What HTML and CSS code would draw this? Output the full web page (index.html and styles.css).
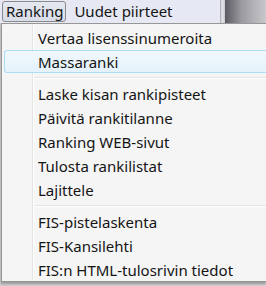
FILE: index.html
```html
<!DOCTYPE html>
<html>
<head>
<meta charset="utf-8">
<link rel="stylesheet" href="styles.css">
</head>
<body>
<div class="screen">
  <div class="menubar">
    <div class="bar-main">
      <span class="bar-item active">Ranking</span>
      <span class="bar-item">Uudet piirteet</span>
    </div>
    <div class="bar-edge"></div>
    <div class="bar-window"></div>
  </div>
  <div class="menu">
    <div class="item">Vertaa lisenssinumeroita</div>
    <div class="item hover">Massaranki</div>
    <div class="sep"></div>
    <div class="item">Laske kisan rankipisteet</div>
    <div class="item">Päivitä rankitilanne</div>
    <div class="item">Ranking WEB-sivut</div>
    <div class="item">Tulosta rankilistat</div>
    <div class="item">Lajittele</div>
    <div class="sep"></div>
    <div class="item">FIS-pistelaskenta</div>
    <div class="item">FIS-Kansilehti</div>
    <div class="item">FIS:n HTML-tulosrivin tiedot</div>
  </div>
</div>
</body>
</html>
```
FILE: styles.css
```css
html, body {
  margin: 0;
  padding: 0;
  background: #f4f4f4;
}
.screen {
  width: 266px;
  height: 286px;
  overflow: hidden;
  font-family: "Segoe UI", "Noto Sans", "Open Sans", sans-serif;
  font-size: 15px;
  color: #141414;
  background: #cfcfcf;
}
.menubar {
  display: flex;
  height: 23px;
}
.bar-main {
  display: flex;
  align-items: stretch;
  width: 220px;
  padding: 1px 0 1px 2px;
  background: #e6e8f4;
  box-sizing: border-box;
}
.bar-item {
  display: flex;
  align-items: center;
  padding: 0 6px 0 7px;
  line-height: 1;
}
.bar-item.active {
  border: 1px solid #8a8a8a;
  border-radius: 3px;
  padding: 0 2px 0 3px;
  background: linear-gradient(#e4e8f0, #d8dde8);
  margin-right: 1px;
}
.bar-edge {
  width: 5px;
  background: linear-gradient(90deg, #a0a0a8, #e8e8ee 40%, #c8c8d0);
}
.bar-window {
  flex: 1;
  background: linear-gradient(90deg, #5a5a60, #9a9aa0 40%, #c8c8cc);
}
.menu {
  margin-left: 1px;
  height: 259px;
  box-sizing: border-box;
  border: 1px solid #979797;
  border-right: none;
  background: #f5f5f5 linear-gradient(90deg, transparent 30px, #e2e3e3 30px, #e2e3e3 31px, #ffffff 31px, #ffffff 32px, transparent 32px);
  padding: 2px 0 0 2px;
  box-shadow: 0 2px 2px #9a9a9a;
}
.item {
  height: 24px;
  display: flex;
  align-items: center;
  padding-left: 34px;
  box-sizing: border-box;
  white-space: nowrap;
}
.item.hover {
  border: 1px solid #aeddf6;
  border-right: none;
  border-radius: 3px 0 0 3px;
  background: linear-gradient(#f1f8fd, #e4f2fc);
  padding-left: 33px;
  height: 23px;
  margin-bottom: 1px;
}
.sep {
  height: 8px;
  margin-left: 31px;
  background: linear-gradient(transparent 3px, #e2e3e3 3px, #e2e3e3 4px, #ffffff 4px, #ffffff 5px, transparent 5px);
}
```
